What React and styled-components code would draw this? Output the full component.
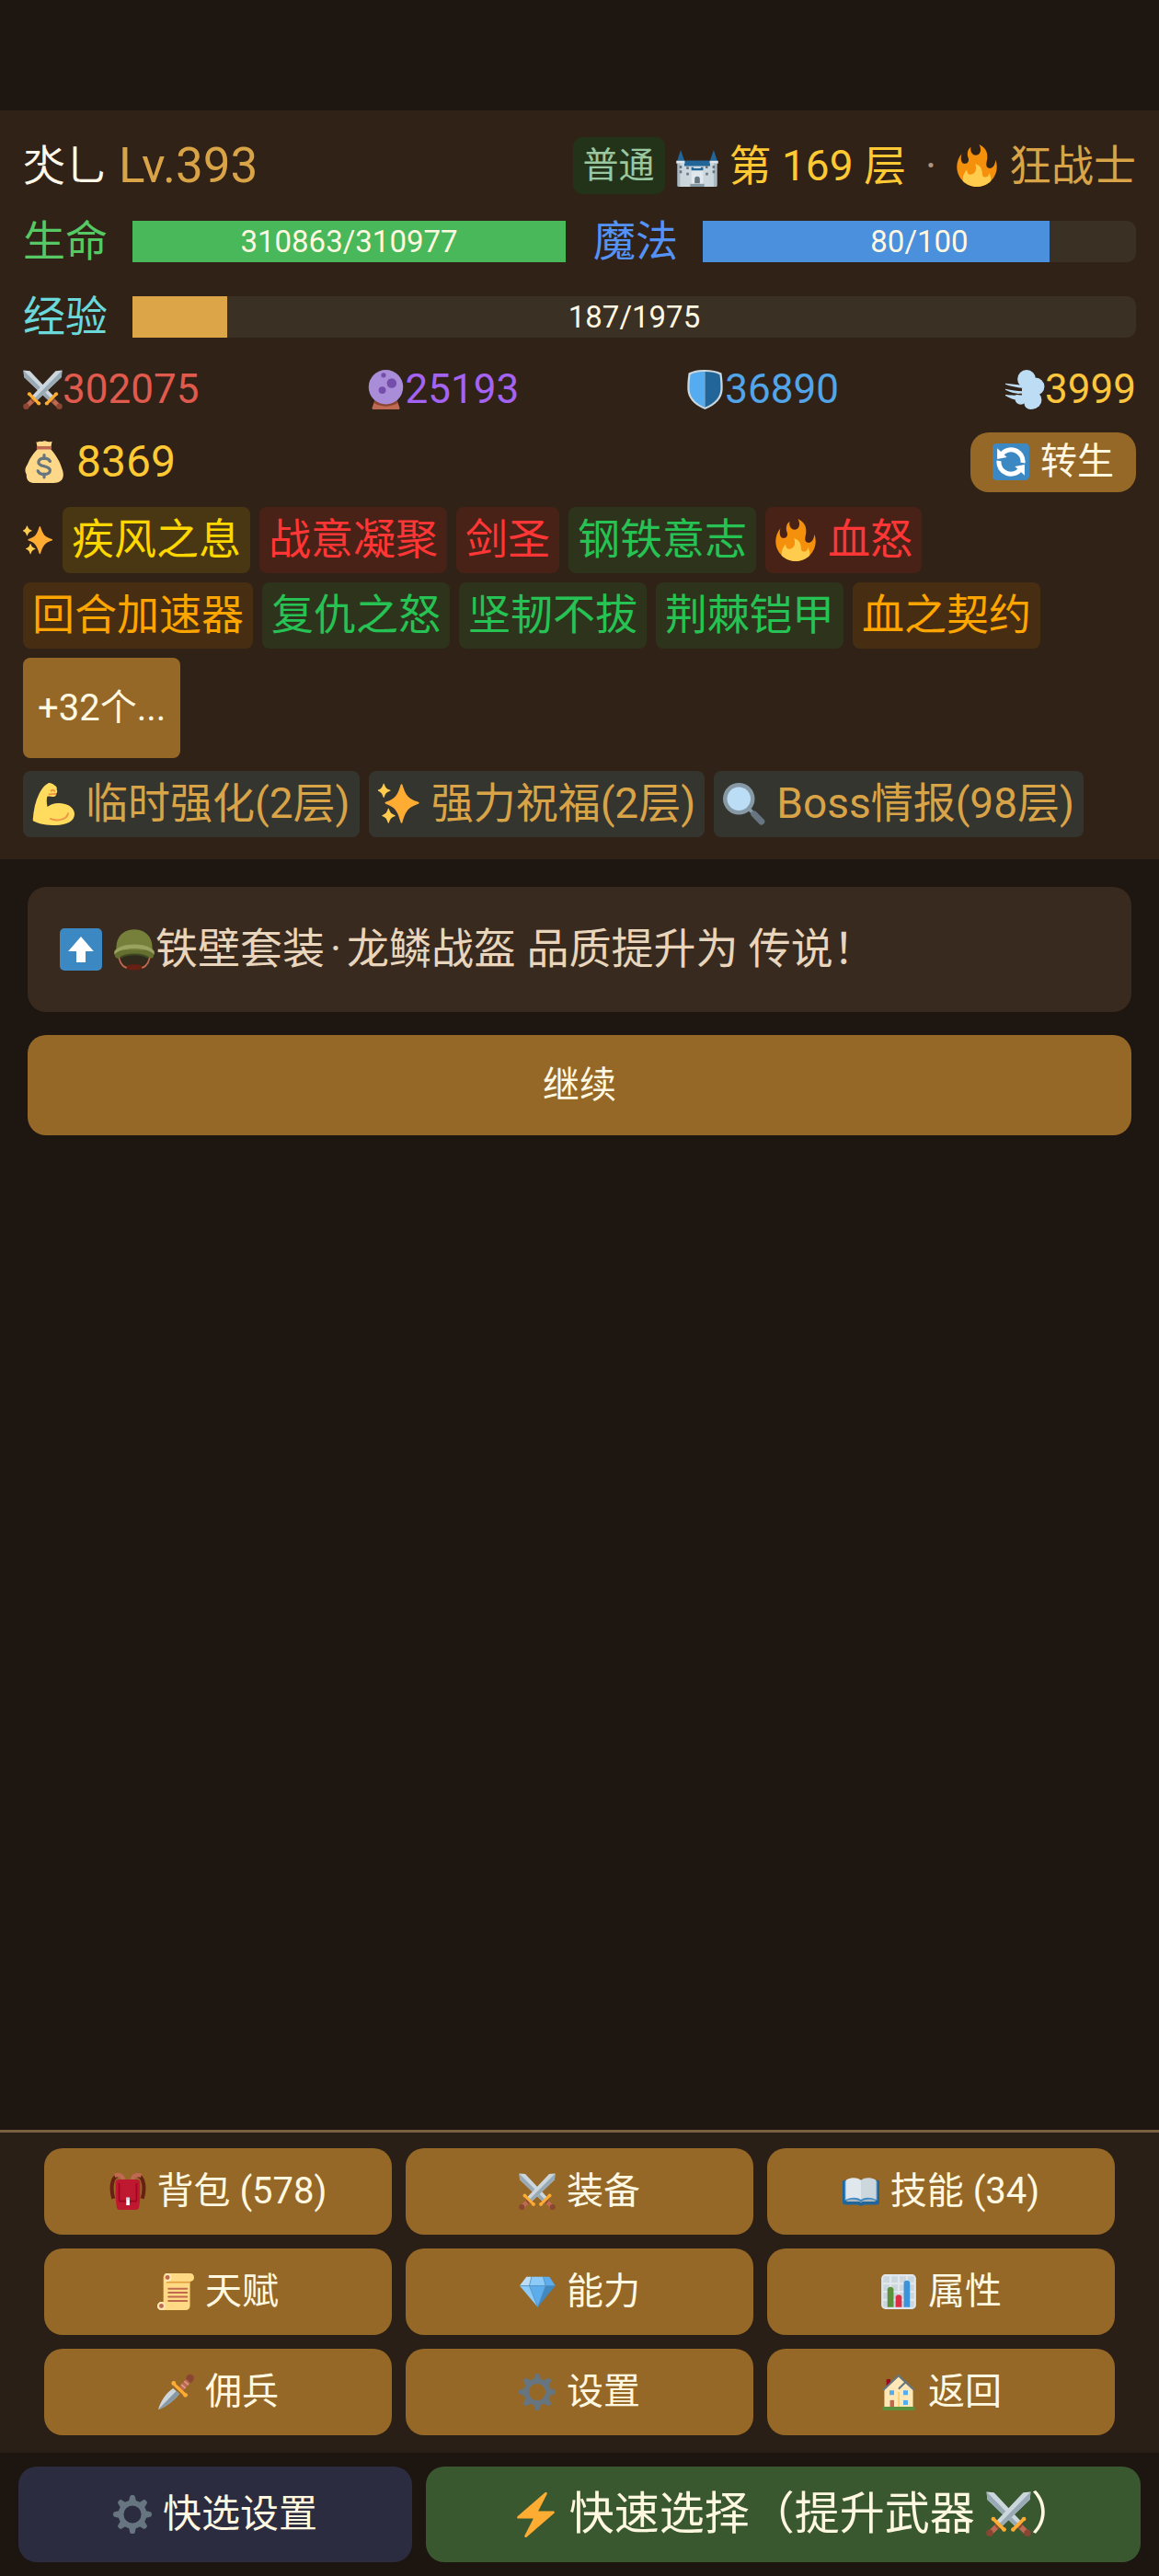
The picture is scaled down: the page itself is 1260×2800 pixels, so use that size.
import React from "react";
import styled, { createGlobalStyle } from "styled-components";

const GlobalStyle = createGlobalStyle`
* {
    box-sizing: border-box;
}
body {
    margin: 0;
    background-color: #1e1611;
}
body, button {
    font-family: Roboto, 'Noto Sans CJK SC', sans-serif;
    line-height: 1.2;
}
button {
    margin: 0;
    padding: 0;
    border: none;
    color: #fff8e1;
    background-color: #956828;
    cursor: pointer;
}`

const Page = styled.div`
min-height: 100vh;
padding-top: 120px;
display: flex;
flex-direction: column;`

const Header = styled.header`
padding: 19px 25px 24px;
display: flex;
flex-direction: column;
background-color: #302217;
font-size: 46px;`

const Row = styled.div`
display: flex;
align-items: center;
justify-content: ${props => props.$spread ? "space-between" : "flex-start"};
gap: 30px;
height: ${props => props.$height || 82}px;
line-height: 64px;
white-space: nowrap;`

const Group = styled.div`
display: flex;
align-items: center;
gap: 12px;`

const Text = styled.span`
color: ${props => props.$color};
font-size: ${props => props.$size || 46}px;`

const Dot = styled.span`
display: inline-block;
width: ${props => props.$width || 24}px;
text-align: center;
color: ${props => props.$color || "inherit"};`

const Badge = styled.span`
padding: 0 11px;
border-radius: 10px;
line-height: 62px;
font-size: 39px;
color: #99c79f;
background-color: #22331a;`

const Meter = styled.div`
flex: 1;
display: flex;
align-items: center;
gap: 27px;
color: ${props => props.$color};`

const Track = styled.div`
flex: 1;
display: grid;
height: 45px;
border-radius: 10px;
background-color: #3a3024;`

const Fill = styled.div`
grid-area: 1 / 1;
background-color: ${props => props.$color};`

const Value = styled.span`
grid-area: 1 / 1;
text-align: center;
line-height: 45px;
font-size: 33px;
color: #fff8e1;`

const Stat = styled.span`
display: flex;
align-items: center;
font-size: 44px;
color: ${props => props.$color};`

const RebirthButton = styled.button`
display: flex;
align-items: center;
gap: 12px;
height: 65px;
padding: 0 24px;
border-radius: 20px;
font-size: 40px;`

const Tags = styled.div`
display: flex;
flex-wrap: wrap;
align-items: center;
gap: 10px;
margin-top: ${props => props.$top || 10}px;`

const Tag = styled.span`
display: flex;
align-items: center;
gap: 12px;
height: 72px;
padding: 0 10px;
border-radius: 8px;
white-space: nowrap;
color: ${props => tones[props.$tone].text};
background-color: ${props => tones[props.$tone].back};`

const MoreButton = styled.button`
height: 109px;
padding: 0 16px;
border-radius: 8px;
font-size: 40px;`

const Main = styled.main`
flex: 1;
display: flex;
flex-direction: column;
gap: 25px;
padding: 30px;`

const Log = styled.div`
display: flex;
align-items: center;
gap: 12px;
min-height: 136px;
padding: 0 35px;
border-radius: 20px;
background-color: #382a1e;
color: #e8d5bb;
font-size: 46px;`

const Pair = styled.span`
display: flex;
align-items: center;`

const ContinueButton = styled.button`
height: 109px;
border-radius: 20px;
font-size: 40px;`

const Menu = styled.nav`
display: grid;
grid-template-columns: repeat(3, 1fr);
gap: 15px;
padding: 17px 48px 19px;
border-top: 3px solid #7a6040;
background-color: #2a1f16;`

const MenuButton = styled.button`
display: flex;
align-items: center;
justify-content: center;
gap: 12px;
height: 94px;
border-radius: 20px;
font-size: 40px;`

const Footer = styled.footer`
display: grid;
grid-template-columns: 428fr 777fr;
gap: 15px;
padding: 15px 20px;
background-color: #1c1510;`

const QuickButton = styled.button`
display: flex;
align-items: center;
justify-content: center;
gap: 12px;
height: 104px;
border-radius: 20px;
white-space: nowrap;
font-size: ${props => props.$size}px;
background-color: ${props => props.$back};`

// the closing bracket takes only half of its square
const Closing = styled.span`
font-feature-settings: "halt";`

const Svg = styled.svg`
flex: none;
display: block;`

const tones = {
    yellow: { text: "#ffd700", back: "#493714" },
    red: { text: "#ff3636", back: "#482117" },
    green: { text: "#26c253", back: "#2e341c" },
    orange: { text: "#ffa500", back: "#472e12" },
    buff: { text: "#d9a347", back: "#353530" },
};

const sword = (
    <>
        <path fill="#CCD6DD" d="M35.6.4 29.7 1 7.6 24.4l4.6 4L35 6.6z"/>
        <path fill="#9AAAB4" d="M35.6.4 10 26.4l2.2 2L35 6.6z"/>
        <path fill="#BF6952" d="m8.2 25.4 3.2 3-6 5.6-3-2.8z"/>
        <path fill="#8A4B38" d="m6.6 27 1.3-1.2 2.8 3.2-1.3 1.1z"/>
        <circle cx="2.9" cy="33.2" r="2.7" fill="#8A4633"/>
        <path fill="none" stroke="#FFAC33" strokeWidth="2.7" strokeLinecap="round" d="m6.2 22.4 8 8"/>
        <circle cx="5.8" cy="22" r="1.7" fill="#FFAC33"/>
        <circle cx="14.4" cy="30.5" r="1.7" fill="#FFAC33"/>
    </>
);

const gearTeeth = [0, 45, 90, 135, 180, 225, 270, 315];

const icons = {
    castle: (
        <>
            <path fill="#269" d="M3.9 4.6.8 14.4h6.6zM32 4.6l-3.4 9.8h6.6zM6.6 13.6h22.8v5.2H6.6z"/>
            <path fill="#CCD6DD" d="M6 18.4h24V36H6z"/>
            <path fill="#AAB8C2" d="M1 16h6v20H2.2A1.2 1.2 0 0 1 1 34.8zM29 16h6v18.8a1.2 1.2 0 0 1-1.2 1.2H29z"/>
            <path fill="#CCD6DD" d="M3.5 16H7v20H3.5zM29 16h3v20h-3z"/>
            <path fill="#E1E8ED" d="M.2 13.8h7.2v2.4H.2zM28.6 13.8h7.2v2.4h-7.2zM13 21.5h10V34H13z"/>
            <path fill="#269" d="M13 19.4h2v1h6v-1h2v2.8H13z"/>
            <path fill="#66757F" d="M2.9 18h2v2.3h-2zM2.9 22.2h2v2.3h-2zM25 18h2v2.3h-2zM31 18h2v2.3h-2zM31 22.2h2v2.3h-2zM8.8 18.9h2v2.3h-2zM8.8 24h2v2.3h-2zM25.2 24h2v2.3h-2zM15.8 33v-3.7a2.2 2.2 0 0 1 4.4 0V33z"/>
            <path fill="#8899A6" d="M12 33.5h12V36H12z"/>
        </>
    ),
    fire: (
        <>
            <path fill="#F4900C" d="M35 19c0-2.062-.367-4.039-1.04-5.868-.46 5.389-3.333 8.157-6.335 6.868-2.812-1.208-.917-5.917-.777-8.164.236-3.809-.012-8.169-6.931-11.794 2.875 5.5.333 8.917-2.333 9.125-2.958.231-5.667-2.542-4.667-7.042-3.238 2.386-3.332 6.402-2.333 9 1.042 2.708-.042 4.958-2.583 5.208-2.84.28-4.418-3.041-2.963-8.333C2.52 10.965 1 14.805 1 19c0 9.389 7.611 17 17 17s17-7.611 17-17z"/>
            <path fill="#FFCC4D" d="M28.394 23.999c.148 3.084-2.561 4.293-4.019 3.709-2.106-.843-1.541-2.291-2.083-5.291s-2.625-5.083-5.708-6c2.25 6.333-1.247 8.667-3.08 9.084-1.872.426-3.753-.001-3.968-4.007C7.352 23.668 6 26.676 6 30c0 .368.023.73.055 1.09C9.125 34.124 13.342 36 18 36s8.875-1.876 11.945-4.91c.032-.36.055-.722.055-1.09 0-2.187-.584-4.236-1.606-6.001z"/>
        </>
    ),
    swords: (
        <>
            <g transform="matrix(-1 0 0 1 36 0)">{sword}</g>
            {sword}
        </>
    ),
    orb: (
        <>
            <path fill="#BF6952" d="M8.6 26h18.8l3.1 8.3c.3 1-.3 1.7-1.3 1.7H6.8c-1 0-1.6-.7-1.3-1.7z"/>
            <path fill="#8A4633" d="M8 27.5h20l1 2.5c-3 2.1-7 3.2-11 3.2S10 32.1 7 30z"/>
            <circle cx="18" cy="15.7" r="15.7" fill="#AA8DD8"/>
            <circle cx="15.9" cy="4.9" r="2.2" fill="#744EAA"/>
            <circle cx="23.3" cy="12.2" r="4.4" fill="#744EAA"/>
            <circle cx="14.7" cy="18.5" r="3.3" fill="#744EAA"/>
        </>
    ),
    shield: (
        <>
            <path fill="#CCD6DD" d="M18 0c6 0 11.300 1 15 3 .8 5.500 1.200 10 1 15-.4 8-6 14-16 18C8 32 2.400 26 2 18c-.2-5 .2-9.500 1-15C6.700 1 12 0 18 0z"/>
            <path fill="#55ACEE" d="M18 1.700c-5.500 0-9.900.9-13.300 2.600-.7 5-1 9.200-.8 13.700C4.300 24.900 9 30.300 18 34.200z"/>
            <path fill="#269" d="M18 1.700c5.500 0 9.900.9 13.300 2.600.7 5 1 9.200.8 13.700-.4 6.900-5.100 12.300-14.100 16.200z"/>
        </>
    ),
    wind: (
        <>
            <g fill="#BDDDF4">
                <circle cx="19.3" cy="8.3" r="8.3"/>
                <circle cx="27.5" cy="15.2" r="8"/>
                <circle cx="25" cy="27.5" r="8"/>
                <circle cx="23" cy="30" r="6"/>
                <circle cx="14" cy="26.5" r="5.2"/>
                <path d="M15 11h14v19H15zM0 12.300c6 .5 10 .9 16 1.700v2.800c-6-.9-11-2-16-3.700zM0 17.300c6 1.400 10 1.800 16 2.200v2.600c-6-.1-11-1.400-16-3.900zM0 22.600c5 .6 8 .7 14 .3l2 5.600c-7-.7-11-2.200-16-5z"/>
            </g>
            <path fill="#302217" d="M6 16.700c3.500.3 6 .5 9 .4v1.600c-3 0-6-.7-9-2zM6 21.200c3 .6 6 .6 9 .4V23c-4 .1-6-.5-9-1.800z"/>
        </>
    ),
    bag: (
        <>
            <path fill="#FDD888" d="M12.500 7 11.300.9c2 .7 2.400-.6 4-.2 1.500.5 2.700-.8 4.200-.3 1.500.5 2.300.8 5.200.1L23.500 7c3 3.500 7.500 9.500 8.700 14 .6 2.300 2.100 4.500 2.100 8 0 5-3.500 7-8.300 7H10c-4.500 0-7.200-2.300-7-6.800C2.700 27.500 1.500 27 2 24c.3-2 1.500-3 2.300-5C6 14.500 9.500 10 12.500 7z"/>
            <path fill="#BF6952" d="M12.500 4.600h11c1.200 0 1.200 2.800 0 2.800h-11c-1.200 0-1.200-2.800 0-2.800z"/>
            <path fill="none" stroke="#67757F" strokeWidth="2.5" strokeLinecap="round" d="M18 12.200v3m0 13v3M23 17.500c-1-1.800-3-2.500-5-2.500-3 0-4.800 1.400-4.800 3.300 0 4.500 9.800 2.400 9.800 7 0 2-2 3.300-5 3.300-2.300 0-4.500-.9-5.300-2.900"/>
        </>
    ),
    refresh: (
        <>
            <rect width="36" height="36" rx="4" fill="#3B88C3"/>
            <path fill="none" stroke="#FFF" strokeWidth="4.5" d="M29.700 19A11.700 11.700 0 0 0 8.500 11M6.300 17A11.700 11.700 0 0 0 27.500 25"/>
            <path fill="#FFF" d="M4.600 4.800v10.600l9.500-1.800zM31.400 31.200V20.600l-9.500 1.800z"/>
        </>
    ),
    sparkles: (
        <>
            <path fill="#FFAC33" d="M34.300 16.300c-8.500-3-10.500-5-13.500-14.500-.3-1-1.300-1-1.600 0C16.300 11.300 14.500 13.300 6.500 16.300c-.9.300-.9 1.300 0 1.600 8 3 9.800 5.500 12.700 15.500.3 1 1.300 1 1.600 0 3-10 5-12.500 13.500-15.500.9-.3.900-1.300 0-1.600z"/>
            <path fill="#FFCC4D" d="M14.300 27.300c-3.100-1.100-3.900-1.900-5-5.200-.1-.5-.8-.5-.9 0-1.100 3.300-1.800 4.100-4.700 5.200-.5.200-.5.800 0 1 2.900 1.100 3.600 2 4.700 5.500.1.500.8.500.9 0 1.100-3.500 1.900-4.400 5-5.500.5-.2.500-.8 0-1zM10.300 6c-3.100-1.100-3.900-1.900-5-5.100-.1-.5-.8-.5-.9 0C3.300 4.100 2.600 4.900-.1 6c-.5.200-.5.700 0 .9 2.700 1.100 3.400 2 4.500 5.200.1.500.8.500.9 0 1.100-3.200 1.900-4.100 5-5.200.5-.2.500-.7 0-.9z"/>
        </>
    ),
    muscle: (
        <>
            <path fill="#FFDC5D" d="M13.500.4c1.600-.9 3.400.3 5.700 1.700 2.200 1.300 1.700 2.600 1.700 4 1 1.300 0 2.600-.6 3.200.3 1.800-1 2.800-3 2.400-1.600-.3-3.300-.7-4.500-.2-.7 2.500-.6 5.500.2 8.900 3-2.500 6.500-3.500 10.500-3.200 7.500.5 12.500 4.300 12.500 9.300 0 6-6.500 9.500-16 9.500-8 0-13.500-.8-18.500-3.300-.8-.4-1-1-.9-2C1.200 23 2.700 15.500 6 9 8 5 10.500 2 13.500.4z"/>
            <path fill="none" stroke="#EF9645" strokeWidth="1.5" strokeLinecap="round" d="M15.500 30.500c5 2.200 14 1.200 15-4.500M16.200 6.800c.8-1 2-1 2.800.2M14.500 9.700c1.500-.3 3.500-.4 5.500-.3"/>
        </>
    ),
    magnifier: (
        <>
            <path stroke="#8899A6" strokeWidth="3" d="m22 22 5 5"/>
            <path stroke="#66757F" strokeWidth="5.5" strokeLinecap="round" d="m26.500 26.500 6.200 6.300"/>
            <circle cx="13.5" cy="13.5" r="13.5" fill="#8899A6"/>
            <circle cx="13.5" cy="13.5" r="10" fill="#BBDDF5"/>
        </>
    ),
    up: (
        <>
            <rect width="36" height="36" rx="4" fill="#3B88C3"/>
            <path fill="#FFF" d="M18 7 7.200 19.600h6.900V29h7.800v-9.400h6.900z"/>
        </>
    ),
    helmet: (
        <>
            <path fill="#3E4B22" d="M5 20h26v3c-1 3-6 4.700-13 4.700S6 26 5 23z"/>
            <path fill="#2f2a1c" d="M7 25.500c3-2 7-2.700 11-2.700s8 .7 11 2.700c0 3-2 5.500-4 6.500H11c-2-1-4-3.500-4-6.500z"/>
            <path fill="#662113" d="M10 33c2-1.700 4-2.200 8-2.200s6 .5 8 2.200c-2 1.800-4.500 2.700-8 2.700S12 34.800 10 33z"/>
            <path fill="none" stroke="#C1694F" strokeWidth="1.4" d="M4.700 21.500c0 6.500 2.300 10.500 6.800 12.300M31.300 21.500c0 6.500-2.300 10.500-6.800 12.300"/>
            <path fill="#76803B" d="M2.700 16C2.700 7 9 1 18 1s15.300 6 15.300 15l.5 4H2.200z"/>
            <path fill="#656F30" d="M1.300 18.500h33.400V22c0 2.500-.9 3.600-3 3.700-2.200-2.800-8-4.200-13.700-4.200S6.500 22.900 4.300 25.700c-2.100-.1-3-1.200-3-3.700z"/>
            <path fill="#9AA25F" d="M1 19.800c2.500-4 9.500-6.100 17-6.100s14.500 2.100 17 6.100v2.700c-3-3.600-10-5.200-17-5.200S4 18.900 1 22.500z"/>
        </>
    ),
    backpack: (
        <>
            <path fill="none" stroke="#662113" strokeWidth="3.6" d="M8 2.700C2.500 4 .8 14 3.800 25M28 2.700c5.500 1.300 7.200 11.300 4.200 22.300"/>
            <path fill="none" stroke="#BF6952" strokeWidth="4" d="M5 2.500c4.500-1.500 8 0 8.500 4.500M31 2.500c-4.500-1.500-8 0-8.500 4.500"/>
            <path fill="#BE1931" d="M6 9c0-1.600 1.200-2.800 2.800-2.800h18.400C28.800 6.200 30 7.400 30 9v16l-1 8c-.2 1.800-1.200 3-3 3H10c-1.800 0-2.800-1.200-3-3l-1-8z"/>
            <path fill="none" stroke="#A0041E" strokeWidth="1.5" d="M9.500 10v16.500c0 .7.400 1 1 1h15c.6 0 1-.3 1-1V10"/>
            <path fill="#FFF" d="M16.400 24h3.300v7.500h-3.300z"/>
            <path fill="#CCD6DD" d="M16.400 24h3.300v2.500h-3.300z"/>
        </>
    ),
    book: (
        <>
            <path fill="#269" d="M2 7c-1.300 0-2 .7-2 2v19.500C0 30 1 31 2.500 31H15c.5 1.300 5.500 1.300 6 0h12.500c1.500 0 2.500-1 2.500-2.500V9c0-1.300-.7-2-2-2z"/>
            <path fill="#3B88C3" d="M1.800 8h32.400v19H1.800z"/>
            <path fill="#AAB8C2" d="M4 26.800c5-2 10.500-1.500 14 1 3.500-2.500 9-3 14-1V28H19.500l-1.500.8-1.500-.8H4z"/>
            <path fill="#E1E8ED" d="M4 6.500C9 4 14.500 4.300 18 7v19c-4-2.500-9-2.700-15 0V8.200C3 7.500 3.300 6.900 4 6.500z"/>
            <path fill="#CCD6DD" d="M32 6.500C27 4 21.500 4.300 18 7v19c4-2.500 9-2.700 15 0V8.200c0-.7-.3-1.300-1-1.700z"/>
        </>
    ),
    scroll: (
        <>
            <path fill="#FFD983" d="M32 0H9.500C7.300 0 6 1.800 6 4v24H3.800A3.900 3.900 0 0 0 0 32c0 2.200 1.600 4 3.800 4H28c2.200 0 4-1.500 4-4V8c2.500 0 4-1.700 4-4s-1.500-4-4-4z"/>
            <path fill="#E39F3D" d="M9 8h23v1.500H9z"/>
            <path fill="#FFE8B6" d="M10 0a4 4 0 1 1 0 8H8V0zM4 28a4 4 0 0 1 0 8 4 4 0 0 1 0-8z"/>
            <circle cx="10" cy="4" r="2.2" fill="#C1694F"/>
            <circle cx="4" cy="32" r="2.2" fill="#C1694F"/>
            <path stroke="#C1694F" strokeWidth="1.8" strokeLinecap="round" d="M11 15h18M11 19h18M11 23h18M11 27h18"/>
        </>
    ),
    gem: (
        <>
            <path fill="#BDDDF4" d="M7.500 3.300.8 12.200h9.500L12.500 3.300z"/>
            <path fill="#8CCAF7" d="M12.500 3.300h11.300l2.500 8.900h-16z"/>
            <path fill="#5DADEC" d="M23.800 3.300H30l5.700 8.900h-9.400zM10.300 12.200h16L18.500 33z"/>
            <path fill="#8CCAF7" d="M.8 12.200h9.500L18.500 33z"/>
            <path fill="#4289C1" d="M26.300 12.200h9.400L18.500 33z"/>
            <path fill="none" stroke="#4B94CC" strokeWidth=".7" d="M.8 12.200h34.900M12.500 3.300l-2.200 8.900L18.500 33l7.800-20.800-2.500-8.900"/>
        </>
    ),
    chart: (
        <>
            <rect x="1" y="1" width="34" height="34" rx="4" fill="#E1E8ED"/>
            <path fill="#CCD6DD" d="M3 3h6v6H3zM11 3h6v6h-6zM19 3h6v6h-6zM27 3h6v6h-6zM3 11h6v6H3zM11 11h6v6h-6zM19 11h6v6h-6zM27 11h6v6h-6zM3 19h6v6H3zM11 19h6v6h-6zM19 19h6v6h-6zM27 19h6v6h-6zM3 27h6v6H3zM11 27h6v6h-6zM19 27h6v6h-6zM27 27h6v6h-6z"/>
            <path fill="#5C913B" d="M7 33V16c0-3.500 6-3.500 6 0v17z"/>
            <path fill="#DD2E44" d="M15 33v-9.500c0-3.500 6-3.500 6 0V33z"/>
            <path fill="#3B94D9" d="M23 33V9.500c0-3.500 6-3.500 6 0V33z"/>
        </>
    ),
    dagger: (
        <>
            <path fill="#CCD6DD" d="M15.500 14.500C9 18.500 3 27 1 35.200c7-2.700 16-9 20.500-15.500z"/>
            <path fill="#8899A6" d="M18.500 17.200 1 35.200c7-2.700 16-9 20.500-15.500z"/>
            <path fill="#BF6952" d="m21 13.500 8.500-9.500 4 3.500-8.500 9.500z"/>
            <path stroke="#DDA08E" strokeWidth="1.3" d="m23.500 10.700 4 3.600M26.500 7.500l4 3.600"/>
            <path fill="#8A4633" d="M28 5.500C28 2 30.500.5 33 .8c2.500.3 3.500 3 2.500 5.200-.7 1.500-1.800 2.600-3.200 3.300z"/>
            <path stroke="#FFAC33" strokeWidth="3" strokeLinecap="round" d="m16.500 10.500 10.500 10"/>
            <circle cx="16" cy="9.5" r="2.2" fill="#FFAC33"/>
            <circle cx="27.5" cy="21" r="2.2" fill="#FFAC33"/>
        </>
    ),
    gear: (
        <>
            <circle cx="18" cy="18" r="10.7" fill="none" stroke="#66757F" strokeWidth="5"/>
            {gearTeeth.map(angle => (
                <path key={angle} fill="#66757F" d="M14.200 7.500 15.600 1.600C15.900.4 16.700 0 18 0s2.100.4 2.400 1.600l1.400 5.900z" transform={`rotate(${angle} 18 18)`}/>
            ))}
        </>
    ),
    house: (
        <>
            <path fill="#A0041E" d="M6 5.500h4V15H6z"/>
            <path fill="#FFE8B6" d="M4 15 17.500 2.500 32 15v18H4z"/>
            <path fill="#FFCC4D" d="M17.500 18h1.300v15h-1.300z"/>
            <path fill="none" stroke="#66757F" strokeWidth="1.9" strokeLinecap="round" d="M3.500 15.500 17.800 2 32.500 15.500M18.500 14.500l6-6"/>
            <path fill="#55ACEE" d="M9 16.500h4.500V21H9zM22.500 16.500H27V21h-4.500zM22.500 26H27v4.500h-4.500z"/>
            <path fill="#C1694F" d="M9.500 26h4v7.500h-4z"/>
            <path fill="#5C913B" d="M3.500 32.500h29c1 0 1.500.7 1.500 1.700s-.5 1.800-1.500 1.800h-29c-1 0-1.500-.8-1.500-1.800s.5-1.700 1.500-1.700z"/>
        </>
    ),
    bolt: (
        <path fill="#FFAC33" d="M32.938 15.651C32.792 15.26 32.418 15 32 15H19.925L26.89 1.458c.219-.426.106-.947-.271-1.243C26.437.071 26.218 0 26 0c-.233 0-.466.082-.653.243L18 6.588 3.347 19.243c-.316.273-.43.714-.284 1.105S3.582 21 4 21h12.075L9.11 34.542c-.219.426-.106.947.271 1.243.182.144.401.215.619.215.233 0 .466-.082.653-.243L18 29.412l14.653-12.655c.317-.273.43-.714.285-1.106z"/>
    ),
};

function Icon({ name, size })
{
    return (
        <Svg width={size} height={size} viewBox="0 0 36 36" aria-hidden="true">{icons[name]}</Svg>
    );
}

function Bar({ label, color, fill, value, max })
{
    return (
        <Meter $color={color}>
            <span>{label}</span>
            <Track role="progressbar" aria-label={label} aria-valuenow={value} aria-valuemax={max}>
                <Fill $color={fill} style={{ width: `${value / max * 100}%` }} />
                <Value>{value}/{max}</Value>
            </Track>
        </Meter>
    );
}

const stats = [
    { icon: "swords", value: "302075", color: "#e05a4e" },
    { icon: "orb", value: "25193", color: "#a463f2" },
    { icon: "shield", value: "36890", color: "#52a5e8" },
    { icon: "wind", value: "3999", color: "#fdc63c" },
];

const skillsTop = [
    { name: "疾风之息", tone: "yellow" },
    { name: "战意凝聚", tone: "red" },
    { name: "剑圣", tone: "red" },
    { name: "钢铁意志", tone: "green" },
    { name: "血怒", tone: "red", icon: "fire" },
];

const skillsBottom = [
    { name: "回合加速器", tone: "orange" },
    { name: "复仇之怒", tone: "green" },
    { name: "坚韧不拔", tone: "green" },
    { name: "荆棘铠甲", tone: "green" },
    { name: "血之契约", tone: "orange" },
];

const buffs = [
    { name: "临时强化(2层)", tone: "buff", icon: "muscle" },
    { name: "强力祝福(2层)", tone: "buff", icon: "sparkles" },
    { name: "Boss情报(98层)", tone: "buff", icon: "magnifier" },
];

const menu = [
    { icon: "backpack", name: "背包 (578)" },
    { icon: "swords", name: "装备" },
    { icon: "book", name: "技能 (34)" },
    { icon: "scroll", name: "天赋" },
    { icon: "gem", name: "能力" },
    { icon: "chart", name: "属性" },
    { icon: "dagger", name: "佣兵" },
    { icon: "gear", name: "设置" },
    { icon: "house", name: "返回" },
];

function renderTag(tag)
{
    return (
        <Tag key={tag.name} $tone={tag.tone}>
            {tag.icon && <Icon name={tag.icon} size={46} />}
            {tag.name}
        </Tag>
    );
}

export default function App()
{
    return (
        <Page>
            <GlobalStyle />
            <Header>
                <Row $spread>
                    <Group>
                        <Text $color="#fff8e9">氼乚</Text>
                        <Text $color="#d9a347" $size={53}>Lv.393</Text>
                    </Group>
                    <Group>
                        <Badge>普通</Badge>
                        <Icon name="castle" size={46} />
                        <Text $color="#ffc933">第 169 层</Text>
                        <Dot $color="#a89684" $width={30}>·</Dot>
                        <Icon name="fire" size={46} />
                        <Text $color="#d9a347">狂战士</Text>
                    </Group>
                </Row>
                <Row>
                    <Bar label="生命" color="#56c965" fill="#48b85a" value={310863} max={310977} />
                    <Bar label="魔法" color="#5592f5" fill="#4a90dc" value={80} max={100} />
                </Row>
                <Row>
                    <Bar label="经验" color="#6bd8da" fill="#dba548" value={187} max={1975} />
                </Row>
                <Row $spread $height={76}>
                    {stats.map(stat => (
                        <Stat key={stat.icon} $color={stat.color}>
                            <Icon name={stat.icon} size={43} />
                            {stat.value}
                        </Stat>
                    ))}
                </Row>
                <Row $spread>
                    <Group>
                        <Icon name="bag" size={46} />
                        <Text $color="#ffc933" $size={48}>8369</Text>
                    </Group>
                    <RebirthButton type="button">
                        <Icon name="refresh" size={40} />
                        转生
                    </RebirthButton>
                </Row>
                <Tags $top={8}>
                    <Icon name="sparkles" size={33} />
                    {skillsTop.map(renderTag)}
                </Tags>
                <Tags>
                    {skillsBottom.map(renderTag)}
                </Tags>
                <Tags>
                    <MoreButton type="button">+32个...</MoreButton>
                </Tags>
                <Tags $top={14}>
                    {buffs.map(renderTag)}
                </Tags>
            </Header>
            <Main>
                <Log>
                    <Icon name="up" size={46} />
                    <Pair>
                        <Icon name="helmet" size={46} />
                        <span>铁壁套装<Dot>·</Dot>龙鳞战盔 品质提升为 传说！</span>
                    </Pair>
                </Log>
                <ContinueButton type="button">继续</ContinueButton>
            </Main>
            <Menu>
                {menu.map(item => (
                    <MenuButton type="button" key={item.name}>
                        <Icon name={item.icon} size={40} />
                        {item.name}
                    </MenuButton>
                ))}
            </Menu>
            <Footer>
                <QuickButton type="button" $size={42} $back="#2b2c40">
                    <Icon name="gear" size={42} />
                    快选设置
                </QuickButton>
                <QuickButton type="button" $size={49} $back="#3a5830">
                    <Icon name="bolt" size={49} />
                    <span>快速选择（提升武器</span>
                    <Pair>
                        <Icon name="swords" size={49} />
                        <Closing>）</Closing>
                    </Pair>
                </QuickButton>
            </Footer>
        </Page>
    );
}
